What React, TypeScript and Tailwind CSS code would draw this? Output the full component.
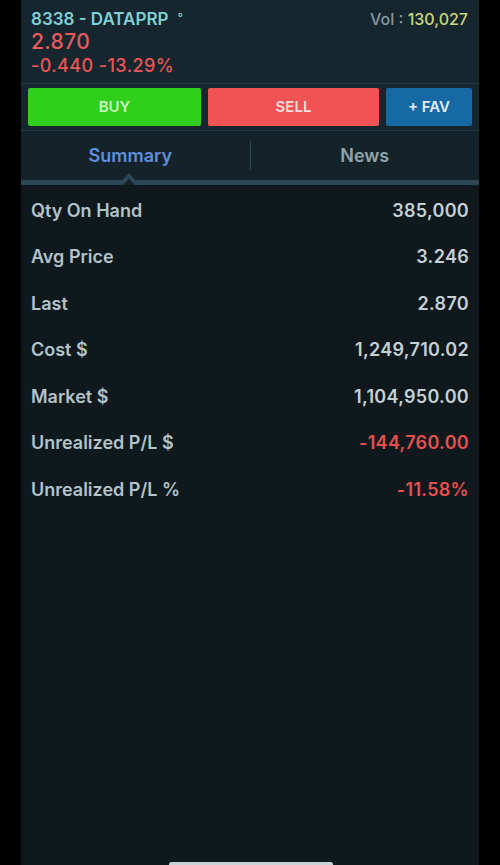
import React from 'react';

const rows = [
  { label: 'Qty On Hand', value: '385,000' },
  { label: 'Avg Price', value: '3.246' },
  { label: 'Last', value: '2.870' },
  { label: 'Cost $', value: '1,249,710.02' },
  { label: 'Market $', value: '1,104,950.00' },
  { label: 'Unrealized P/L $', value: '-144,760.00', neg: true },
  { label: 'Unrealized P/L %', value: '-11.58%', neg: true },
];

const App: React.FC = () => {
  return (
    <div className="w-[500px] h-[865px] bg-black flex font-['Inter','Liberation_Sans',Arial,sans-serif] font-semibold overflow-hidden">
      <div className="ml-[21px] w-[458px] h-full flex flex-col bg-[#0e181d] relative">
        {/* quote header */}
        <div className="bg-[#15262e] h-[84px] px-[10px] pt-[9px] flex justify-between border-b border-[#253a44]">
          <div className="flex flex-col">
            <div className="text-[17px] leading-[20px] text-[#7fd0d6]">
              8338 - DATAPRP <span className="text-[11px] align-top relative top-[-2px] ml-[5px]">°</span>
            </div>
            <div className="text-[21px] leading-[26px] text-[#ec5a5c] font-medium tracking-[0.4px]">2.870</div>
            <div className="text-[18px] leading-[22px] text-[#ea5656] font-medium tracking-[0.4px]">-0.440 -13.29%</div>
          </div>
          <div className="text-[16px] leading-[20px] font-medium mr-[1px]">
            <span className="text-[#8799a2]">Vol : </span>
            <span className="text-[#cbd97c]">130,027</span>
          </div>
        </div>

        {/* action buttons */}
        <div className="bg-[#15262e] h-[47px] flex items-start pt-[4px] px-[7px] gap-[6px] border-b border-[#253a44]">
          <button className="w-[173px] h-[38px] bg-[#2fcf1c] text-[#d2f3c0] text-[15px] rounded-[2px]">BUY</button>
          <button className="w-[171px] h-[38px] bg-[#f05353] text-[#f8dede] text-[15px] rounded-[2px] ml-[1px]">SELL</button>
          <button className="flex-1 h-[38px] bg-[#1769a4] text-[#e3edf5] text-[15px] rounded-[2px] ml-[1px]">+ FAV</button>
        </div>

        {/* tabs */}
        <div className="relative bg-[#14232a] h-[54px] flex border-b-[5px] border-[#2c4854]">
          <div className="flex-1 flex items-center justify-center text-[18px] text-[#5e8fdc] pb-[1px]">
            <span className="mr-[10px]">Summary</span>
          </div>
          <div className="w-px bg-[#2d4650] my-[10px]" />
          <div className="flex-1 flex items-center justify-center text-[18px] text-[#8ea3ab] pb-[1px]">News</div>
          <svg className="absolute left-[97px] bottom-[-5px]" width="22" height="16" viewBox="0 0 22 16">
            <path d="M0 16 L11 4 L22 16 Z" fill="#2c4854" />
            <path d="M5 16 L11 9.5 L17 16 Z" fill="#14232a" />
          </svg>
        </div>

        {/* summary rows */}
        <div className="flex flex-col pt-[2px] px-[10px]">
          {rows.map(r => (
            <div key={r.label} className="h-[46.5px] flex items-center justify-between text-[18px]">
              <span className="text-[#b3c3ca]">{r.label}</span>
              <span className={`tracking-[0.3px] ${r.neg ? 'text-[#e8504e]' : 'text-[#c6d0d4]'}`}>{r.value}</span>
            </div>
          ))}
        </div>

        {/* home indicator */}
        <div className="absolute bottom-[-2px] left-[148px] w-[164px] h-[5px] rounded-full bg-[#c9d3d6]" />
      </div>
    </div>
  );
};

export default App;
